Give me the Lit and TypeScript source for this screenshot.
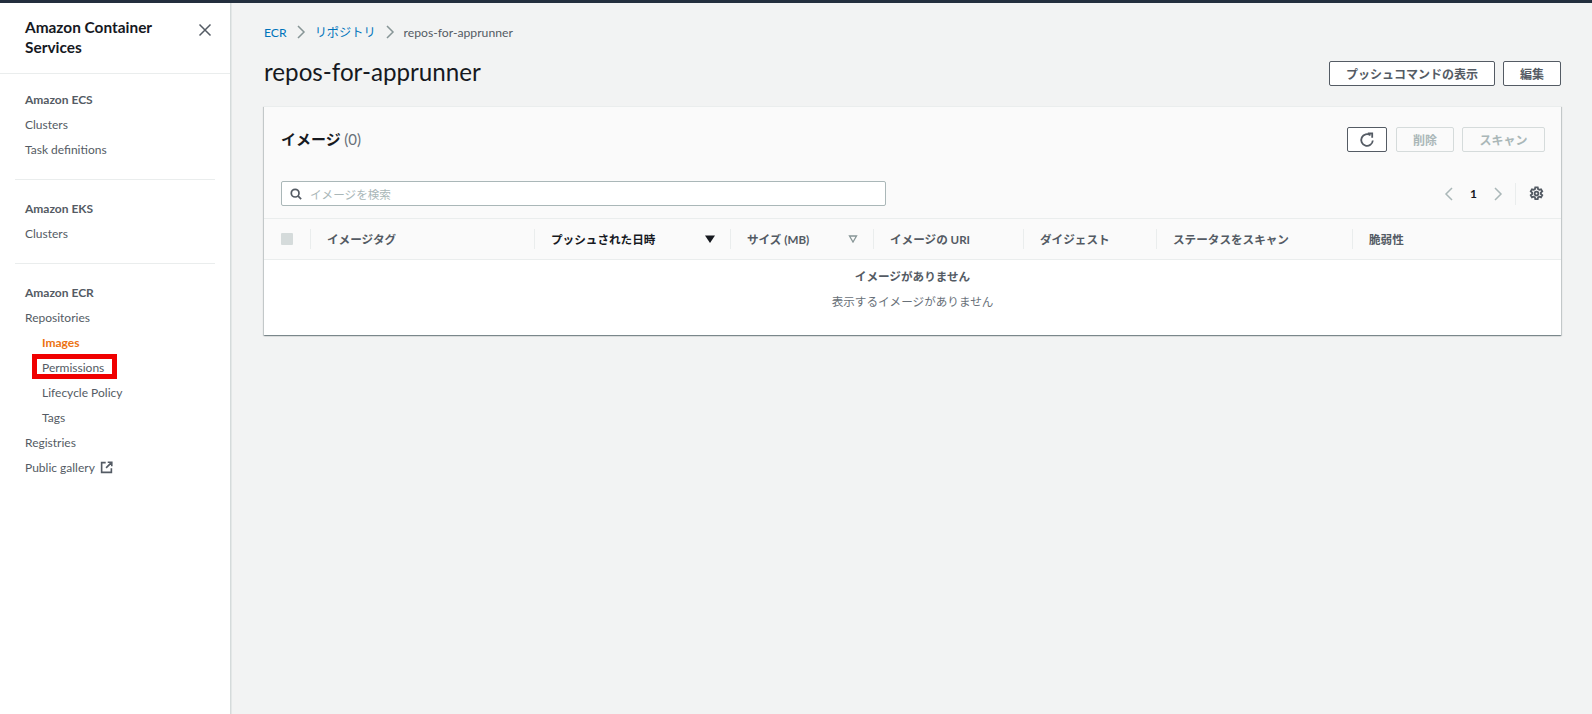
import { LitElement, html, css } from 'lit';
import { customElement } from 'lit/decorators.js';

const COLUMNS = [
  { label: 'イメージタグ', width: 224 },
  { label: 'プッシュされた日時', width: 196, strong: true, sort: 'active' },
  { label: 'サイズ (MB)', width: 143, sort: 'idle' },
  { label: 'イメージの URI', width: 150 },
  { label: 'ダイジェスト', width: 133 },
  { label: 'ステータスをスキャン', width: 196 },
  { label: '脆弱性', width: 209 },
];

@customElement('app-root')
export class AppRoot extends LitElement {
  static styles = css`
    :host {
      display: block;
      font-family: 'Lato', 'Noto Sans CJK JP', sans-serif;
      font-size: 12px;
      color: #16191f;
    }

    .page {
      display: flex;
      height: 714px;
      border-top: 3px solid #232f3e;
      box-sizing: border-box;
      background: #f2f3f3;
      overflow: hidden;
    }

    /* side navigation */
    .nav {
      flex: 0 0 231px;
      box-sizing: border-box;
      background: #fff;
      border-right: 1px solid #d5dbdb;
      box-shadow: 1px 0 0 #e4e7e7;
    }

    .nav-head {
      display: flex;
      justify-content: space-between;
      height: 71px;
      box-sizing: border-box;
      padding: 15px 18px 0 25px;
      border-bottom: 1px solid #eaeded;
    }

    .nav-title {
      margin: 0;
      font-size: 15.4px;
      font-weight: 700;
      line-height: 19.5px;
      width: 170px;
    }

    .close {
      width: 14px;
      height: 14px;
      margin-top: 5px;
      stroke: #545b64;
      fill: none;
      stroke-width: 1.5;
    }

    .nav-section {
      padding: 16px 0 18px;
      margin: 0 15px;
      border-bottom: 1px solid #eaeded;
    }

    .nav-section.first {
      padding: 13px 0 17px;
    }

    .nav-section:last-child {
      border-bottom: 0;
    }

    .nav-item {
      display: flex;
      align-items: center;
      gap: 5px;
      height: 24.9px;
      padding-left: 10px;
      font-size: 12px;
      color: #545b64;
      white-space: nowrap;
    }

    .nav-item.heading {
      font-weight: 700;
    }

    .nav-item.sub {
      padding-left: 27px;
    }

    .nav-item.active {
      color: #ec7211;
      font-weight: 700;
    }

    .marked {
      position: relative;
    }

    .marked::after {
      content: '';
      position: absolute;
      left: 17px;
      top: -1px;
      width: 85px;
      height: 25px;
      box-sizing: border-box;
      border: 5px solid #f00000;
    }

    .ext {
      width: 13px;
      height: 13px;
      stroke: #545b64;
      fill: none;
      stroke-width: 2;
    }

    /* main column */
    .main {
      flex: 1;
      min-width: 0;
      padding: 18px 31px 0 33px;
    }

    .crumbs {
      display: flex;
      align-items: center;
      height: 22px;
      color: #545b64;
      font-size: 12.2px;
    }

    .crumbs a {
      color: #0073bb;
    }

    .crumbs svg {
      width: 10px;
      height: 14px;
      margin: 0 9px;
      stroke: #879596;
      fill: none;
      stroke-width: 1.5;
    }

    .title-row {
      display: flex;
      align-items: center;
      justify-content: space-between;
      height: 43px;
      margin-top: 9px;
    }

    .title-row h1 {
      margin: 0 0 4px;
      font-size: 24.2px;
      font-weight: 400;
    }

    .actions {
      display: flex;
      gap: 8px;
    }

    .btn {
      display: flex;
      align-items: center;
      justify-content: center;
      height: 25px;
      box-sizing: border-box;
      background: #fff;
      border: 1px solid #545b64;
      border-radius: 2px;
      color: #545b64;
      font-size: 12px;
      font-weight: 700;
    }

    .btn.push {
      width: 166px;
    }

    .btn.edit {
      width: 58px;
    }

    .btn.refresh {
      width: 40px;
      margin-right: 1px;
    }

    .btn.off {
      background: transparent;
      border-color: #d5dbdb;
      color: #aab7b8;
    }

    .btn.delete {
      width: 58px;
    }

    .btn.scan {
      width: 83px;
    }

    .card {
      margin-top: 11px;
      height: 229px;
      background: #fff;
      box-shadow: 0 1px 1px rgba(0, 28, 36, 0.3), 1px 1px 1px rgba(0, 28, 36, 0.15),
        -1px 1px 1px rgba(0, 28, 36, 0.15);
      border-top: 1px solid #eaeded;
      box-sizing: border-box;
    }

    .card-top {
      height: 112px;
      box-sizing: border-box;
      padding: 20px 16px 0 17px;
      background: #fafafa;
      border-bottom: 1px solid #eaeded;
    }

    .card-title-row {
      display: flex;
      align-items: center;
      justify-content: space-between;
    }

    .card-title {
      margin: 0 0 2px;
      font-size: 15px;
      font-weight: 700;
    }

    .card-title span {
      color: #687078;
      font-weight: 400;
    }

    .filter-row {
      display: flex;
      align-items: center;
      justify-content: space-between;
      margin-top: 29px;
    }

    .search {
      display: flex;
      align-items: center;
      gap: 8px;
      width: 605px;
      height: 25px;
      box-sizing: border-box;
      padding-left: 8px;
      background: #fff;
      border: 1px solid #aab7b8;
      border-radius: 2px;
      color: #aab7b8;
      font-size: 11.6px;
    }

    .search svg {
      width: 12px;
      height: 12px;
      stroke: #545b64;
      fill: none;
      stroke-width: 2;
    }

    .pager {
      display: flex;
      align-items: center;
      height: 22px;
      font-weight: 700;
      font-size: 12px;
    }

    .pager .arrow {
      width: 9px;
      height: 14px;
      stroke: #aab7b8;
      fill: none;
      stroke-width: 1.5;
    }

    .pager .num {
      width: 41px;
      text-align: center;
    }

    .pager .sep {
      width: 1px;
      height: 22px;
      margin: 0 13px 0 12px;
      background: #eaeded;
    }

    .gear {
      width: 15px;
      height: 15px;
      margin-right: 1px;
      stroke: #545b64;
      fill: none;
      stroke-width: 2;
    }

    .thead {
      display: flex;
      height: 41px;
      box-sizing: border-box;
      background: #fafafa;
      border-bottom: 1px solid #eaeded;
      align-items: center;
    }

    .check-cell {
      flex: 0 0 46px;
      height: 20px;
      display: flex;
      align-items: center;
      padding-left: 17px;
      box-sizing: border-box;
    }

    .check {
      width: 12px;
      height: 12px;
      border-radius: 1px;
      background: #d5dbdb;
    }

    .th {
      display: flex;
      align-items: center;
      justify-content: space-between;
      height: 20px;
      box-sizing: border-box;
      padding: 0 15px 0 16px;
      border-left: 1px solid #eaeded;
      color: #545b64;
      font-size: 11.6px;
      font-weight: 700;
      white-space: nowrap;
    }

    .th.strong {
      color: #16191f;
    }

    .sort {
      width: 10px;
      height: 8px;
    }

    .sort.active {
      fill: #16191f;
    }

    .sort.idle {
      fill: none;
      stroke: #879596;
      stroke-width: 1.3;
    }

    .empty {
      padding-top: 4px;
      text-align: center;
      color: #545b64;
      font-size: 11.6px;
      line-height: 25px;
    }

    .empty strong {
      display: block;
    }

    .empty span {
      color: #687078;
    }
  `;

  render() {
    return html`
      <div class="page">
        <nav class="nav">
          <div class="nav-head">
            <h2 class="nav-title">Amazon Container Services</h2>
            <svg class="close" viewBox="0 0 14 14"><path d="M1.5 1.5l11 11M12.5 1.5l-11 11" /></svg>
          </div>
          <div class="nav-section first">
            <div class="nav-item heading">Amazon ECS</div>
            <div class="nav-item">Clusters</div>
            <div class="nav-item">Task definitions</div>
          </div>
          <div class="nav-section">
            <div class="nav-item heading">Amazon EKS</div>
            <div class="nav-item">Clusters</div>
          </div>
          <div class="nav-section">
            <div class="nav-item heading">Amazon ECR</div>
            <div class="nav-item">Repositories</div>
            <div class="nav-item sub active">Images</div>
            <div class="nav-item sub marked">Permissions</div>
            <div class="nav-item sub">Lifecycle Policy</div>
            <div class="nav-item sub">Tags</div>
            <div class="nav-item">Registries</div>
            <div class="nav-item">
              Public gallery
              <svg class="ext" viewBox="0 0 16 16">
                <path d="M7 2H2v12h12V9M9.5 1.5h5v5M14 2L7.5 8.5" />
              </svg>
            </div>
          </div>
        </nav>

        <main class="main">
          <div class="crumbs">
            <a>ECR</a>
            <svg viewBox="0 0 10 14"><path d="M2 1l6 6-6 6" /></svg>
            <a>リポジトリ</a>
            <svg viewBox="0 0 10 14"><path d="M2 1l6 6-6 6" /></svg>
            <span>repos-for-apprunner</span>
          </div>

          <div class="title-row">
            <h1>repos-for-apprunner</h1>
            <div class="actions">
              <div class="btn push">プッシュコマンドの表示</div>
              <div class="btn edit">編集</div>
            </div>
          </div>

          <section class="card">
            <div class="card-top">
              <div class="card-title-row">
                <h2 class="card-title">イメージ <span>(0)</span></h2>
                <div class="actions">
                  <div class="btn refresh">
                    <svg width="16" height="16" viewBox="0 0 16 16" fill="none" stroke="#545b64" stroke-width="1.8">
                      <path d="M13.8 8.5A5.8 5.8 0 1 1 11.5 3.4" />
                      <path d="M8.8 1.2h4.4v4.4" transform="translate(0 .2)" />
                    </svg>
                  </div>
                  <div class="btn off delete">削除</div>
                  <div class="btn off scan">スキャン</div>
                </div>
              </div>
              <div class="filter-row">
                <div class="search">
                  <svg viewBox="0 0 14 14"><circle cx="6" cy="6" r="4.5" /><path d="M9.5 9.5L13 13" /></svg>
                  イメージを検索
                </div>
                <div class="pager">
                  <svg class="arrow" viewBox="0 0 9 14"><path d="M8 1L2 7l6 6" /></svg>
                  <span class="num">1</span>
                  <svg class="arrow" viewBox="0 0 9 14"><path d="M1 1l6 6-6 6" /></svg>
                  <span class="sep"></span>
                  <svg class="gear" viewBox="0 0 16 16">
                    <circle cx="8" cy="8" r="2" />
                    <path
                      d="M6.7 1.5h2.6l.4 1.9 1.3.7 1.8-.6 1.3 2.2-1.4 1.3v1.5l1.4 1.3-1.3 2.2-1.8-.6-1.3.7-.4 1.9H6.7l-.4-1.9-1.3-.7-1.8.6-1.3-2.2 1.4-1.3V7L1.9 5.7l1.3-2.2 1.8.6 1.3-.7z"
                    />
                  </svg>
                </div>
              </div>
            </div>

            <div class="thead">
              <div class="check-cell"><div class="check"></div></div>
              ${COLUMNS.map(
                (c) => html`
                  <div class="th ${c.strong ? 'strong' : ''}" style="width:${c.width}px">
                    <span>${c.label}</span>
                    ${c.sort
                      ? html`<svg class="sort ${c.sort}" viewBox="0 0 10 8"><path d="${c.sort === 'active' ? 'M0 .5h10L5 8z' : 'M1.5 1h7L5 7z'}" /></svg>`
                      : ''}
                  </div>
                `
              )}
            </div>

            <div class="empty">
              <strong>イメージがありません</strong>
              <span>表示するイメージがありません</span>
            </div>
          </section>
        </main>
      </div>
    `;
  }
}
